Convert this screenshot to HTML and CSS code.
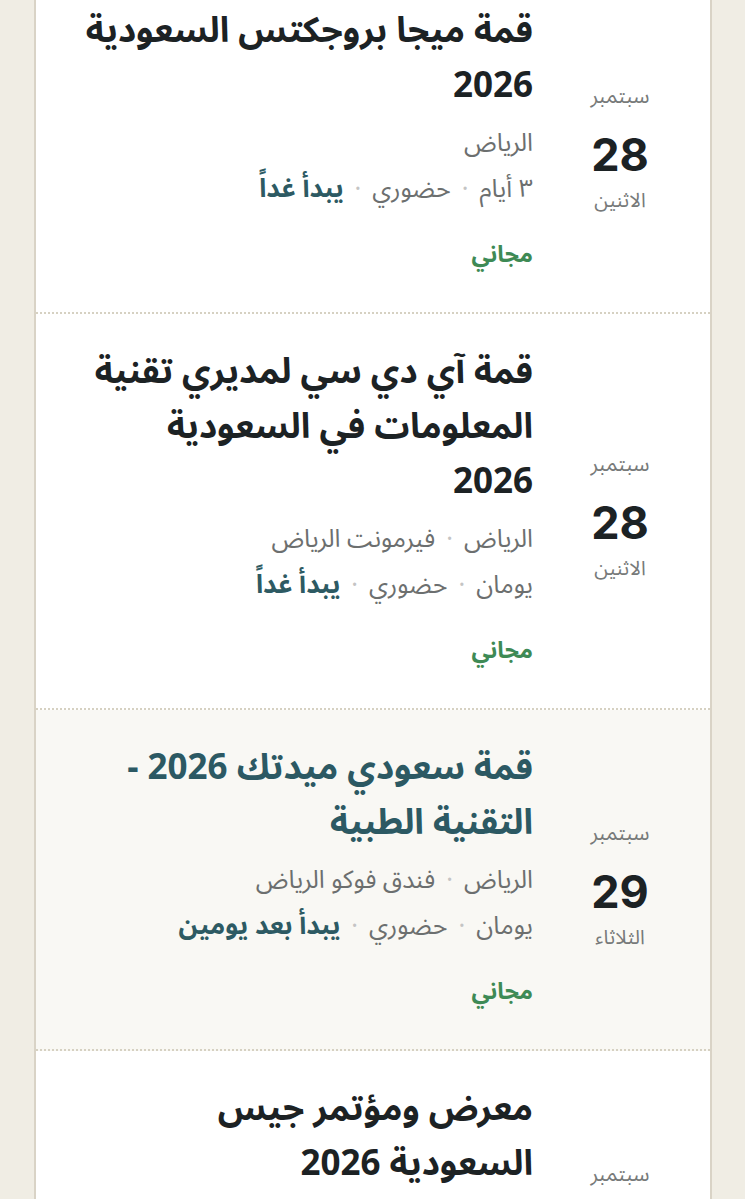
FILE: index.html
```html
<!DOCTYPE html>
<html lang="ar" dir="rtl">
<head>
<meta charset="utf-8">
<title>فعاليات</title>
<link rel="stylesheet" href="styles.css">
</head>
<body>
<main class="events">
  <article class="event">
    <div class="date">
      <span class="month">سبتمبر</span>
      <span class="day">28</span>
      <span class="weekday">الاثنين</span>
    </div>
    <div class="info">
      <h2 class="title">قمة ميجا بروجكتس السعودية 2026</h2>
      <div class="meta"><span>الرياض</span></div>
      <div class="meta"><span>٣ أيام</span><span class="dot">·</span><span>حضوري</span><span class="dot">·</span><span class="soon">يبدأ غداً</span></div>
      <div class="price">مجاني</div>
    </div>
  </article>
  <article class="event">
    <div class="date">
      <span class="month">سبتمبر</span>
      <span class="day">28</span>
      <span class="weekday">الاثنين</span>
    </div>
    <div class="info">
      <h2 class="title">قمة آي دي سي لمديري تقنية المعلومات في السعودية 2026</h2>
      <div class="meta"><span>الرياض</span><span class="dot">·</span><span>فيرمونت الرياض</span></div>
      <div class="meta"><span>يومان</span><span class="dot">·</span><span>حضوري</span><span class="dot">·</span><span class="soon">يبدأ غداً</span></div>
      <div class="price">مجاني</div>
    </div>
  </article>
  <article class="event active">
    <div class="date">
      <span class="month">سبتمبر</span>
      <span class="day">29</span>
      <span class="weekday">الثلاثاء</span>
    </div>
    <div class="info">
      <h2 class="title">قمة سعودي ميدتك 2026 - التقنية الطبية</h2>
      <div class="meta"><span>الرياض</span><span class="dot">·</span><span>فندق فوكو الرياض</span></div>
      <div class="meta"><span>يومان</span><span class="dot">·</span><span>حضوري</span><span class="dot">·</span><span class="soon">يبدأ بعد يومين</span></div>
      <div class="price">مجاني</div>
    </div>
  </article>
  <article class="event">
    <div class="date">
      <span class="month">سبتمبر</span>
      <span class="day">30</span>
      <span class="weekday">الأربعاء</span>
    </div>
    <div class="info">
      <h2 class="title">معرض ومؤتمر جيس السعودية 2026</h2>
      <div class="meta"><span>الرياض</span></div>
      <div class="meta"><span>٣ أيام</span><span class="dot">·</span><span>حضوري</span></div>
      <div class="price">مجاني</div>
    </div>
  </article>
</main>
</body>
</html>
```

FILE: styles.css
```css
html, body {
  margin: 0;
  padding: 0;
}
body {
  background: #f0ede4;
  font-family: "Noto Sans Arabic", "DejaVu Sans", "Noto Sans", sans-serif;
  overflow: hidden;
  height: 1199px;
}
.events {
  margin: -27px 33px 0 34px;
  background: #ffffff;
  border-left: 2px solid #d9d3c6;
  border-right: 2px solid #d9d3c6;
}
.event {
  display: flex;
  align-items: center;
  gap: 42px;
  padding: 31px 45px 39px 46px;
  border-bottom: 2px dotted #d6d1c2;
}
.event.active {
  background: #f9f8f4;
}
.date {
  width: 90px;
  flex: none;
  display: flex;
  flex-direction: column;
  align-items: center;
  color: #777a7a;
  padding-top: 20px;
}
.month {
  font-size: 21px;
  line-height: 30px;
}
.day {
  font-family: Inter, Roboto, "Noto Sans", sans-serif;
  font-size: 45px;
  font-weight: 700;
  line-height: 60px;
  color: #1c2224;
  margin-top: 14px;
}
.weekday {
  font-size: 20px;
  line-height: 32px;
}
.info {
  flex: 1;
  min-width: 0;
}
.title {
  margin: 0 0 6px;
  font-size: 35px;
  line-height: 55px;
  font-weight: 700;
  color: #1c2224;
}
.active .title {
  color: #2c5963;
}
.meta {
  display: flex;
  gap: 11px;
  font-size: 25px;
  line-height: 46px;
  color: #6c6f6f;
}
.dot {
  color: #c4c4c4;
}
.soon {
  font-weight: 700;
  font-size: 26px;
  color: #2d5a63;
}
.price {
  margin-top: 25px;
  font-size: 23px;
  line-height: 36px;
  font-weight: 700;
  color: #3e8a55;
}
```
